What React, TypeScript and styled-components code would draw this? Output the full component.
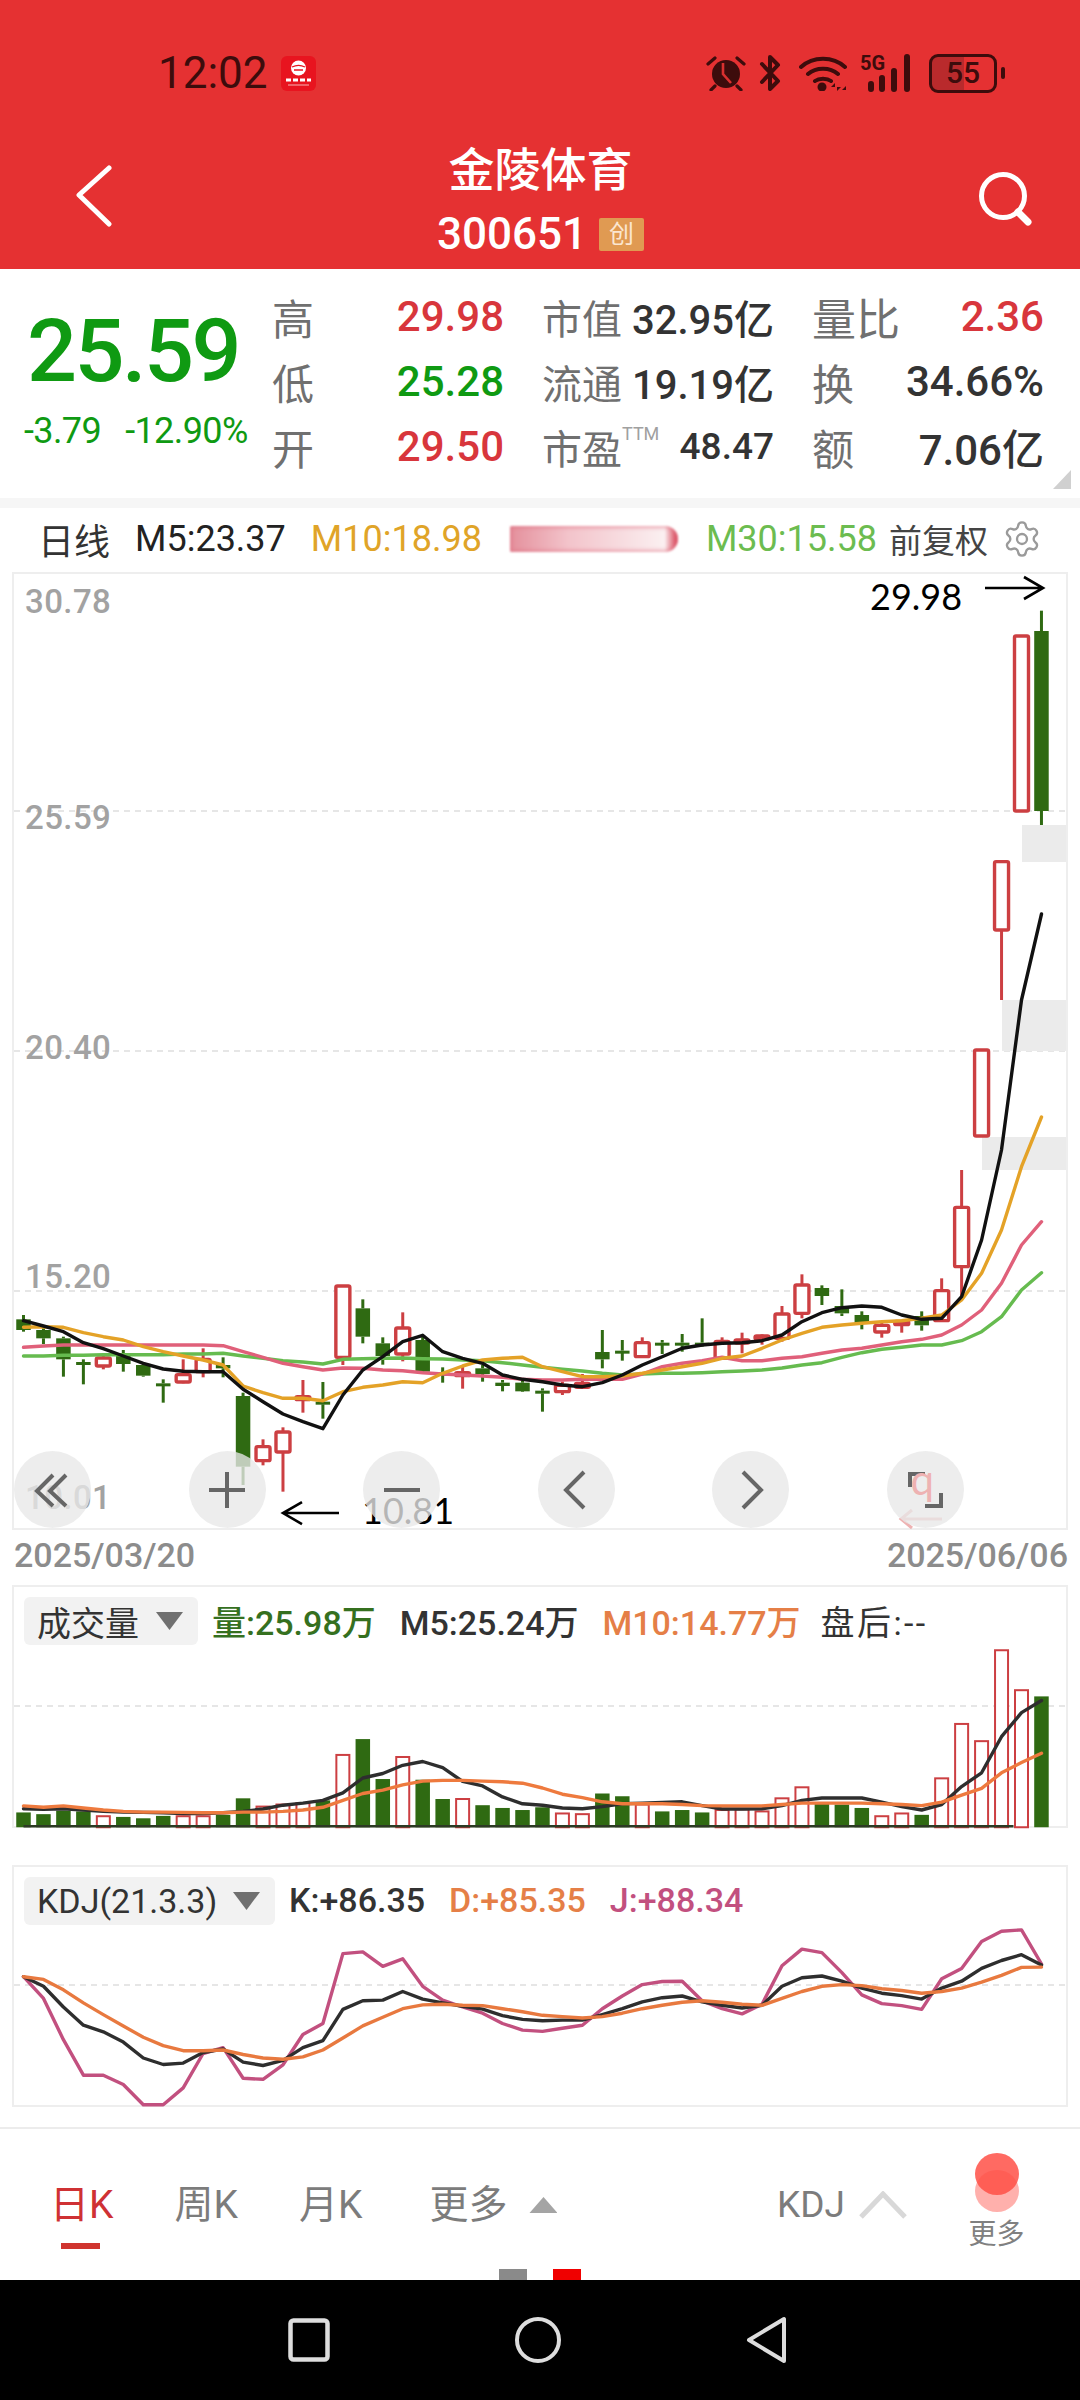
import styled, { createGlobalStyle } from "styled-components";
import { Settings } from "lucide-react";

const RED = "#d8363c";
const GREEN = "#0f9a12";
const CANDLE_RED = "#cc3f42";
const CANDLE_GREEN = "#2f6a12";

const GlobalStyle = createGlobalStyle`
  html, body {
    margin: 0;
    padding: 0;
    background: #fff;
  }
  body {
    width: 1080px;
    height: 2400px;
    overflow: hidden;
    font-family: Roboto, "Noto Sans CJK SC", sans-serif;
  }
  * {
    box-sizing: border-box;
  }
`;

const Page = styled.div`
  width: 1080px;
  height: 2400px;
  display: flex;
  flex-direction: column;
  background: #fff;
`;

/* header */
const Header = styled.header`
  height: 269px;
  background: #e53132;
  padding-top: 53px;
  display: flex;
  flex-direction: column;
`;

const StatusBar = styled.div`
  height: 40px;
  padding: 0 75px 0 158px;
  display: flex;
  align-items: center;
  justify-content: space-between;
  color: #3d0c0c;
`;

const TimeGroup = styled.div`
  display: flex;
  align-items: center;
  gap: 13px;
`;

const Time = styled.span`
  font-size: 44px;
  line-height: 40px;
`;

const StatusIcons = styled.div`
  display: flex;
  align-items: center;
  height: 40px;
`;

const IconSlot = styled.span<{ $gap: number }>`
  display: flex;
  margin-left: ${(p) => p.$gap}px;
`;

const NetworkMark = styled.div`
  position: relative;
  width: 56px;
  height: 38px;
  margin-left: 12px;
  margin-right: 13px;
`;

const FiveG = styled.span`
  position: absolute;
  left: 0;
  top: -1px;
  font-size: 20px;
  line-height: 20px;
  font-weight: 700;
  color: #3d0c0c;
`;

const SignalSvg = styled.svg`
  position: absolute;
  left: 8px;
  top: 0;
`;

const Battery = styled.div`
  width: 68px;
  height: 39px;
  border: 3px solid #3d0c0c;
  border-radius: 9px;
  background: linear-gradient(90deg, #b92a2c 0 52%, transparent 52%);
  display: flex;
  align-items: center;
  justify-content: center;
  font-size: 30px;
  line-height: 30px;
  font-weight: 500;
  color: #3d0c0c;
`;

const BatteryNub = styled.div`
  width: 4px;
  height: 12px;
  margin-left: 4px;
  border-radius: 2px;
  background: #3d0c0c;
`;

const NavBar = styled.div`
  margin-top: 52px;
  padding: 0 48px 0 75px;
  display: flex;
  align-items: flex-start;
  justify-content: space-between;
`;

const NavIcon = styled.span<{ $top: number }>`
  display: flex;
  margin-top: ${(p) => p.$top}px;
`;

const TitleBlock = styled.div`
  display: flex;
  flex-direction: column;
  align-items: center;
  margin-right: 10px;
  color: #fff;
`;

const StockName = styled.div`
  font-size: 46px;
  line-height: 50px;
  font-weight: 500;
`;

const CodeRow = styled.div`
  margin-top: 19px;
  display: flex;
  align-items: center;
  gap: 12px;
`;

const StockCode = styled.span`
  font-size: 44px;
  line-height: 40px;
  font-weight: 500;
`;

const BoardBadge = styled.span`
  width: 45px;
  height: 33px;
  background: #e09a52;
  border-radius: 2px;
  font-size: 25px;
  line-height: 33px;
  text-align: center;
  color: #fbe6d0;
`;

/* quote */
const Quote = styled.section`
  position: relative;
  height: 229px;
  display: flex;
  padding-top: 15px;
`;

const PriceBlock = styled.div`
  width: 272px;
  padding-left: 24px;
  display: flex;
  flex-direction: column;
`;

const Price = styled.div`
  margin-left: 3px;
  margin-top: 23px;
  font-size: 88px;
  line-height: 88px;
  font-weight: 500;
  letter-spacing: -2.5px;
  color: ${GREEN};
`;

const ChangeRow = styled.div`
  margin-top: 16px;
  display: flex;
  gap: 24px;
  font-size: 36px;
  line-height: 40px;
  color: ${GREEN};
  letter-spacing: -0.6px;
  white-space: nowrap;
`;

const StatGrid = styled.div`
  display: grid;
  grid-template-columns: 232px 232px 232px;
  grid-auto-rows: 65px;
  column-gap: 38px;
`;

const Stat = styled.div`
  display: flex;
  align-items: center;
  justify-content: space-between;
`;

const StatLabel = styled.span<{ $size?: number }>`
  font-size: ${(p) => p.$size ?? 42}px;
  color: #707070;
  display: inline-flex;
  align-items: flex-start;
`;

const Sup = styled.span`
  font-size: 18px;
  line-height: 32px;
  color: #a0a0a0;
`;

const StatValue = styled.span<{ $tone?: "up" | "down"; $size?: number }>`
  font-size: ${(p) => p.$size ?? 42}px;
  font-weight: 500;
  color: ${(p) => (p.$tone === "up" ? RED : p.$tone === "down" ? GREEN : "#333")};
  white-space: nowrap;
`;

const CornerMark = styled.div`
  position: absolute;
  left: 1053px;
  top: 201px;
  width: 18px;
  height: 19px;
  background: #d0d0d0;
  clip-path: polygon(100% 0, 100% 100%, 0 100%);
`;

const Strip = styled.div`
  height: 10px;
  background: #f6f6f6;
`;

/* price legend */
const Legend = styled.div`
  height: 64px;
  padding: 0 35px 2px 38px;
  display: flex;
  align-items: center;
  gap: 25px;
  font-size: 36px;
  white-space: nowrap;
`;

const LegendItem = styled.span<{ $color: string; $nudge?: number }>`
  color: ${(p) => p.$color};
  margin-left: ${(p) => p.$nudge ?? 0}px;
`;

const BlurredValue = styled.span`
  width: 168px;
  height: 26px;
  margin-left: 3px;
  border-radius: 2px 14px 14px 2px;
  background: linear-gradient(90deg, #e4909c, #f3c4cb 35%, #fbf0f1 92%, #d94a5c 99%);
  box-shadow: inset 0 0 4px 1px rgba(224, 110, 128, 0.75);
  filter: blur(1.2px);
`;

const LegendRight = styled.div`
  margin-left: -13px;
  display: flex;
  align-items: center;
  gap: 14px;
  font-size: 33px;
  color: #444;
`;

/* chart panels */
const ChartPanel = styled.section<{ $height: number; $offset?: number }>`
  position: relative;
  margin: ${(p) => p.$offset ?? 0}px 12px 0;
  height: ${(p) => p.$height}px;
  border: 2px solid #eeeeee;
  display: flex;
  flex-direction: column;
`;

const ChartSvg = styled.svg`
  display: block;
  overflow: visible;
`;

const AxisLabel = styled.span<{ $top: number }>`
  position: absolute;
  left: 11px;
  top: ${(p) => p.$top}px;
  font-size: 33px;
  line-height: 40px;
  font-weight: 500;
  color: #a2a2a2;
  letter-spacing: 0.4px;
`;

const Annotation = styled.span<{ $left: number; $top: number }>`
  position: absolute;
  left: ${(p) => p.$left}px;
  top: ${(p) => p.$top}px;
  font-family: Lato, sans-serif;
  font-size: 36px;
  line-height: 40px;
  color: #000;
`;

const ToolRow = styled.div`
  position: absolute;
  left: 0;
  bottom: 0;
  display: flex;
  gap: 97.5px;
`;

const ToolButton = styled.div`
  position: relative;
  width: 77px;
  height: 77px;
  border-radius: 50%;
  background: rgba(232, 232, 232, 0.78);
  display: flex;
  align-items: center;
  justify-content: center;
`;

const PinkGlyph = styled.span`
  position: absolute;
  left: 24px;
  top: 3px;
  font-family: Lato, sans-serif;
  font-size: 42px;
  line-height: 50px;
  color: #eeb2b2;
`;

const DateRow = styled.div`
  height: 55px;
  padding: 0 12px 5px 14px;
  display: flex;
  align-items: center;
  justify-content: space-between;
  font-size: 34px;
  font-weight: 500;
  color: #8c8c8c;
`;

const PanelHead = styled.div`
  height: 63px;
  padding: 10px 0 0 10px;
  display: flex;
  align-items: flex-start;
`;

const Selector = styled.div<{ $width: number }>`
  width: ${(p) => p.$width}px;
  height: 48px;
  padding: 0 15px 0 13px;
  background: #f2f2f2;
  border-radius: 6px;
  display: flex;
  align-items: center;
  justify-content: space-between;
  font-size: 34px;
  color: #333;
  white-space: nowrap;
`;

const SelectorCaret = styled.span`
  width: 27px;
  height: 18px;
  background: #707070;
  clip-path: polygon(0 0, 100% 0, 50% 100%);
`;

const ReadoutRow = styled.div`
  height: 46px;
  margin-left: 14px;
  display: flex;
  align-items: center;
  gap: 24px;
  font-size: 34px;
  white-space: nowrap;
`;

const Readout = styled.span<{ $color: string }>`
  color: ${(p) => p.$color};
  font-weight: 500;
`;

const AfterHours = styled(Readout)`
  margin-left: -4px;
  letter-spacing: 2.4px;
  font-weight: 400;
`;

/* bottom tabs */
const TabBar = styled.nav`
  position: relative;
  margin-top: 20px;
  height: 153px;
  border-top: 2px solid #ececec;
  padding: 0 55px 0 50px;
  display: flex;
  align-items: flex-start;
`;

const Tabs = styled.div`
  padding-top: 53px;
  display: flex;
  gap: 61px;
  align-items: center;
`;

const Tab = styled.span<{ $active?: boolean }>`
  position: relative;
  font-size: 39px;
  line-height: 46px;
  color: ${(p) => (p.$active ? "#cf3134" : "#7c7c7c")};

  ${(p) =>
    p.$active &&
    `&::after {
      content: "";
      position: absolute;
      left: 11px;
      top: 61px;
      width: 39px;
      height: 6px;
      background: #d0342f;
    }`}
`;

const MoreTab = styled(Tab)`
  display: flex;
  align-items: center;
  gap: 22px;
  margin-left: 6px;
`;

const UpCaret = styled.span`
  width: 28px;
  height: 16px;
  background: #a4a4a4;
  clip-path: polygon(50% 0, 100% 100%, 0 100%);
`;

const IndicatorToggle = styled.div`
  margin-left: auto;
  padding-top: 53px;
  display: flex;
  align-items: center;
  gap: 13px;
  font-size: 37px;
  line-height: 46px;
  color: #7c7c7c;
`;

const MoreButton = styled.div`
  margin-left: 60px;
  width: 57px;
  padding-top: 24px;
  display: flex;
  flex-direction: column;
  align-items: center;
`;

const MoreDots = styled.div`
  position: relative;
  width: 44px;
  height: 59px;
`;

const MoreDot = styled.span<{ $top: number; $opacity: number }>`
  position: absolute;
  left: 0;
  top: ${(p) => p.$top}px;
  width: 44px;
  height: 42px;
  border-radius: 50%;
  background: rgba(255, 80, 70, ${(p) => p.$opacity});
`;

const MoreLabel = styled.span`
  margin-top: 5px;
  font-size: 28px;
  line-height: 36px;
  color: #808080;
  white-space: nowrap;
`;

const PageDot = styled.span<{ $left: number; $color: string }>`
  position: absolute;
  left: ${(p) => p.$left}px;
  bottom: 0;
  width: 28px;
  height: 11px;
  background: ${(p) => p.$color};
`;

const SystemNav = styled.div`
  height: 120px;
  background: #000;
  padding: 0 292px 0 288px;
  display: flex;
  align-items: center;
  justify-content: space-between;
`;

/* chart data, sampled from the picture */
const candles: [number, number, number, number, number][] = [
  [495, 508, 540, 545, 0], [535, 540, 565, 582, 0], [560, 565, 628, 680, 0], [628, 636, 642, 703, 0],
  [610, 624, 648, 658, 1], [600, 612, 642, 665, 0], [640, 645, 677, 680, 0], [688, 700, 706, 758, 0],
  [628, 674, 696, 700, 1], [595, 628, 665, 682, 1], [622, 645, 655, 682, 0], [728, 738, 950, 1005, 0],
  [868, 890, 932, 946, 1], [832, 846, 906, 1025, 1], [690, 740, 748, 788, 1], [696, 755, 763, 806, 0],
  [408, 408, 622, 645, 1], [448, 475, 560, 580, 0], [562, 580, 618, 644, 0], [487, 534, 612, 634, 1],
  [555, 570, 665, 668, 0], [652, 668, 672, 698, 0], [650, 668, 675, 716, 1], [645, 655, 672, 695, 0],
  [690, 698, 708, 724, 0], [690, 698, 724, 726, 0], [715, 722, 730, 785, 0], [695, 706, 725, 735, 1],
  [672, 700, 712, 714, 1], [540, 606, 628, 655, 0], [570, 602, 608, 632, 0], [562, 578, 620, 622, 1],
  [570, 578, 584, 612, 0], [552, 578, 586, 605, 0], [505, 578, 585, 590, 0], [562, 574, 625, 628, 1],
  [548, 570, 578, 610, 1], [553, 558, 566, 584, 1], [468, 492, 565, 575, 1], [373, 405, 490, 505, 1],
  [406, 414, 438, 465, 0], [418, 468, 490, 498, 0], [484, 495, 518, 538, 0], [515, 526, 546, 563, 1],
  [510, 514, 524, 548, 1], [484, 498, 526, 542, 0], [385, 422, 512, 514, 1], [60, 172, 350, 450, 1],
  [-300, -300, -42, -42, 1], [-865, -865, -660, -450, 1], [-1542, -1542, -1017, -1017, 1], [-1618, -1557, -1017, -975, 0],
];

const ma5 = [512, 528, 545, 578, 596, 618, 640, 657, 664, 665, 665, 718, 755, 792, 815, 836, 735, 660, 620, 575, 556, 605, 625, 640, 675, 688, 695, 705, 710, 698, 675, 645, 620, 595, 585, 580, 578, 572, 555, 515, 488, 473, 468, 472, 495, 508, 505, 440, 270, 0, -450, -708];
const ma10 = [532, 530, 532, 548, 560, 570, 590, 605, 618, 630, 645, 708, 728, 745, 745, 752, 725, 712, 705, 695, 698, 670, 648, 630, 625, 622, 650, 665, 680, 680, 678, 670, 660, 650, 640, 625, 618, 595, 570, 550, 532, 525, 520, 515, 512, 505, 495, 450, 370, 240, 50, -99];
const ma20 = [592, 588, 585, 585, 585, 585, 585, 585, 585, 585, 587, 605, 622, 640, 650, 660, 654, 655, 660, 662, 668, 672, 675, 678, 682, 688, 690, 690, 688, 688, 688, 672, 650, 640, 632, 622, 632, 632, 625, 620, 610, 600, 595, 585, 575, 568, 555, 525, 480, 400, 285, 215];
const ma30 = [618, 618, 616, 616, 614, 614, 614, 614, 612, 612, 610, 618, 625, 632, 636, 642, 628, 626, 625, 624, 626, 627, 630, 632, 638, 645, 652, 658, 663, 670, 675, 672, 670, 670, 668, 665, 663, 660, 654, 645, 638, 622, 608, 598, 592, 585, 585, 572, 545, 500, 420, 368];

const volumes = [675, 680, 670, 672, 686, 688, 692, 685, 686, 686, 682, 634, 658, 652, 648, 640, 508, 462, 578, 514, 580, 636, 636, 654, 662, 668, 660, 678, 680, 620, 628, 652, 672, 668, 675, 668, 666, 672, 634, 602, 650, 652, 662, 686, 678, 682, 576, 418, 468, 204, 320, 338];
const volM5 = [664, 666, 664, 668, 672, 674, 675, 676, 678, 678, 676, 672, 665, 654, 648, 640, 618, 575, 562, 538, 527, 545, 585, 598, 630, 650, 654, 662, 664, 658, 650, 648, 646, 644, 655, 665, 665, 664, 655, 640, 633, 633, 633, 645, 658, 668, 652, 600, 560, 455, 385, 350];
const volM10 = [656, 660, 656, 662, 668, 672, 674, 674, 675, 676, 676, 674, 674, 672, 668, 660, 640, 620, 610, 595, 584, 582, 582, 584, 586, 590, 604, 622, 632, 644, 650, 650, 650, 652, 655, 656, 656, 656, 652, 648, 648, 648, 648, 650, 652, 655, 645, 625, 605, 560, 530, 503];

const kdjK = [1152, 1180, 1240, 1293, 1312, 1342, 1388, 1407, 1403, 1372, 1362, 1400, 1410, 1395, 1358, 1338, 1247, 1222, 1220, 1195, 1217, 1228, 1238, 1246, 1265, 1276, 1280, 1278, 1278, 1262, 1245, 1225, 1213, 1208, 1225, 1235, 1243, 1235, 1180, 1155, 1150, 1165, 1185, 1200, 1207, 1217, 1185, 1165, 1128, 1105, 1088, 1118];
const kdjD = [1152, 1160, 1190, 1228, 1262, 1295, 1328, 1352, 1367, 1367, 1365, 1378, 1388, 1392, 1385, 1365, 1330, 1295, 1270, 1245, 1234, 1232, 1235, 1236, 1245, 1254, 1264, 1268, 1272, 1268, 1258, 1245, 1235, 1226, 1222, 1226, 1232, 1235, 1215, 1195, 1180, 1175, 1178, 1187, 1192, 1200, 1195, 1185, 1168, 1148, 1125, 1124];
const kdjJ = [1152, 1215, 1335, 1438, 1438, 1465, 1524, 1524, 1475, 1375, 1358, 1447, 1450, 1408, 1320, 1288, 1085, 1080, 1122, 1100, 1180, 1220, 1240, 1258, 1288, 1307, 1311, 1302, 1293, 1245, 1208, 1175, 1166, 1165, 1222, 1245, 1260, 1232, 1120, 1072, 1082, 1140, 1205, 1230, 1236, 1247, 1158, 1128, 1050, 1020, 1016, 1115];

const xAt = (i: number) => 23.5 + 19.96 * i;
const mainY = (z: number) => 1150 + z / 3;
const lowerY = (z: number) => 1580 + z / 2.904;

const toPoints = (values: number[], toY: (z: number) => number) =>
  values.map((v, i) => `${xAt(i).toFixed(1)},${toY(v).toFixed(1)}`).join(" ");

const Line = ({ values, toY, color, width = 3.4 }: { values: number[]; toY: (z: number) => number; color: string; width?: number }) => (
  <polyline points={toPoints(values, toY)} fill="none" stroke={color} strokeWidth={width} strokeLinejoin="round" strokeLinecap="round" />
);

const GridLine = ({ y }: { y: number }) => (
  <line x1="14" x2="1066" y1={y} y2={y} stroke="#dedede" strokeWidth="1.5" strokeDasharray="6 5" />
);

const PriceChart = () => (
  <ChartSvg width="1052" height="954" viewBox="14 574 1052 954">
    <GridLine y={811} />
    <GridLine y={1051} />
    <GridLine y={1291} />
    <rect x="1022" y="825" width="44" height="37" fill="#ebebeb" />
    <rect x="1002" y="1000" width="64" height="51" fill="#ebebeb" />
    <rect x="982" y="1137" width="84" height="33" fill="#ebebeb" />
    {candles.map(([hi, top, bot, lo, up], i) => {
      const x = xAt(i);
      const color = up ? CANDLE_RED : CANDLE_GREEN;
      return (
        <g key={i}>
          <line x1={x} x2={x} y1={mainY(hi)} y2={mainY(top)} stroke={color} strokeWidth="3" />
          <line x1={x} x2={x} y1={mainY(bot)} y2={mainY(lo)} stroke={color} strokeWidth="3" />
          {up ? (
            <rect x={x - 7} y={mainY(top)} width="14" height={Math.max(mainY(bot) - mainY(top), 3)} rx="1.5" fill="#fff" stroke={color} strokeWidth="3.4" />
          ) : (
            <rect x={x - 7.25} y={mainY(top)} width="14.5" height={Math.max(mainY(bot) - mainY(top), 3)} fill={color} />
          )}
        </g>
      );
    })}
    <Line values={ma30} toY={mainY} color="#66bb4f" />
    <Line values={ma20} toY={mainY} color="#e0607a" />
    <Line values={ma10} toY={mainY} color="#e4a227" />
    <Line values={ma5} toY={mainY} color="#111" />
    <path d="M985 588H1042M1024 577L1043 588L1024 599" fill="none" stroke="#000" strokeWidth="2.6" />
    <path d="M339 1513H283M302 1502L283 1513L302 1524" fill="none" stroke="#000" strokeWidth="2.6" />
    <path d="M942 1519H902M912 1510L901 1519L912 1528" fill="none" stroke="#eeb2b2" strokeWidth="3" />
  </ChartSvg>
);

const VolumeChart = () => (
  <ChartSvg width="1052" height="176" viewBox="14 1650 1052 176">
    <GridLine y={1706} />
    {volumes.map((top, i) => {
      const x = xAt(i);
      const y = lowerY(top);
      const bottom = lowerY(718);
      return candles[i][4] ? (
        <rect key={i} x={x - 6.5} y={y} width="13" height={bottom - y} fill="#fff" stroke={CANDLE_RED} strokeWidth="2" />
      ) : (
        <rect key={i} x={x - 7.25} y={y} width="14.5" height={bottom - y} fill={CANDLE_GREEN} />
      );
    })}
    <line x1={xAt(0)} x2={xAt(50) - 8} y1={lowerY(715)} y2={lowerY(715)} stroke="#2c3a24" strokeWidth="2.5" />
    <Line values={volM5} toY={lowerY} color="#2e2e2e" />
    <Line values={volM10} toY={lowerY} color="#ee7a3e" />
  </ChartSvg>
);

const KdjChart = () => (
  <ChartSvg width="1052" height="175" viewBox="14 1930 1052 175">
    <GridLine y={1985} />
    <Line values={kdjJ} toY={lowerY} color="#c2507f" />
    <Line values={kdjK} toY={lowerY} color="#2e2e2e" />
    <Line values={kdjD} toY={lowerY} color="#e8793f" />
  </ChartSvg>
);

/* icons */
const ToolIcon = ({ d }: { d: string }) => (
  <svg width="44" height="44" viewBox="0 0 44 44" fill="none" stroke="#666" strokeWidth="4">
    <path d={d} />
  </svg>
);

const AppIcon = () => (
  <svg width="35" height="35" viewBox="0 0 35 35">
    <rect width="35" height="35" rx="6" fill="#e8141f" />
    <circle cx="17.5" cy="12" r="7.5" fill="#fff" />
    <path d="M11 11c4-2 9-2 13 0M13 14h9" stroke="#e8141f" strokeWidth="1.3" fill="none" />
    <path d="M5 24h5M12 24h5M19 24h5M26 24h4" stroke="#fff" strokeWidth="3" />
    <path d="M7 29h21" stroke="#f7b5b5" strokeWidth="1" />
  </svg>
);

const AlarmIcon = () => (
  <svg width="40" height="36" viewBox="0 0 40 36">
    <circle cx="20" cy="19" r="14" fill="#3d0c0c" />
    <path d="M2 9l7-6M38 9l-7-6M9 31l-4 4M31 31l4 4" stroke="#3d0c0c" strokeWidth="3.2" strokeLinecap="round" />
    <path d="M17 8v11l8 9" stroke="#d9302f" strokeWidth="2.6" fill="none" />
  </svg>
);

const BluetoothIcon = () => (
  <svg width="24" height="36" viewBox="0 0 24 36">
    <path d="M3 9l16 17-8 8V2l8 8L3 27" fill="none" stroke="#3d0c0c" strokeWidth="4" strokeLinejoin="round" strokeLinecap="round" />
  </svg>
);

const WifiIcon = () => (
  <svg width="49" height="36" viewBox="0 0 49 36">
    <path d="M2 12c12-11 32-11 44 0M9 19c8-7 22-7 30 0M16 26c4-3 12-3 16 0" fill="none" stroke="#3d0c0c" strokeWidth="4" strokeLinecap="round" />
    <circle cx="23" cy="32" r="4.5" fill="#3d0c0c" />
    <path d="M36 28l-4 4h4zM38 36l4-4h-4zM47 31l-4 4h4z" fill="#3d0c0c" />
  </svg>
);

const SignalBars = () => (
  <SignalSvg width="47" height="38" viewBox="0 0 47 38">
    <path d="M3 30v5M14 24v11M26 17v18M39 3v32" stroke="#3d0c0c" strokeWidth="6" strokeLinecap="round" />
  </SignalSvg>
);

const App = () => (
  <Page>
    <GlobalStyle />
    <Header>
      <StatusBar>
        <TimeGroup>
          <Time>12:02</Time>
          <AppIcon />
        </TimeGroup>
        <StatusIcons>
          <AlarmIcon />
          <IconSlot $gap={13}>
            <BluetoothIcon />
          </IconSlot>
          <IconSlot $gap={16}>
            <WifiIcon />
          </IconSlot>
          <NetworkMark>
            <SignalBars />
            <FiveG>5G</FiveG>
          </NetworkMark>
          <Battery>55</Battery>
          <BatteryNub />
        </StatusIcons>
      </StatusBar>
      <NavBar>
        <NavIcon $top={20}>
          <svg width="38" height="62" viewBox="0 0 38 62" fill="none" stroke="#fff" strokeWidth="5" strokeLinecap="round" strokeLinejoin="round">
            <path d="M34 3L4 30L34 59" />
          </svg>
        </NavIcon>
        <TitleBlock>
          <StockName>金陵体育</StockName>
          <CodeRow>
            <StockCode>300651</StockCode>
            <BoardBadge>创</BoardBadge>
          </CodeRow>
        </TitleBlock>
        <NavIcon $top={26}>
          <svg width="54" height="56" viewBox="0 0 54 56" fill="none" stroke="#fff" strokeLinecap="round">
            <circle cx="25" cy="25" r="21.5" strokeWidth="5" />
            <path d="M40 41L50 51" strokeWidth="7" />
          </svg>
        </NavIcon>
      </NavBar>
    </Header>

    <Quote>
      <PriceBlock>
        <Price>25.59</Price>
        <ChangeRow>
          <span>-3.79</span>
          <span>-12.90%</span>
        </ChangeRow>
      </PriceBlock>
      <StatGrid>
        <Stat>
          <StatLabel>高</StatLabel>
          <StatValue $tone="up">29.98</StatValue>
        </Stat>
        <Stat>
          <StatLabel $size={40}>市值</StatLabel>
          <StatValue $size={40}>32.95亿</StatValue>
        </Stat>
        <Stat>
          <StatLabel $size={44}>量比</StatLabel>
          <StatValue $tone="up">2.36</StatValue>
        </Stat>
        <Stat>
          <StatLabel>低</StatLabel>
          <StatValue $tone="down">25.28</StatValue>
        </Stat>
        <Stat>
          <StatLabel $size={40}>流通</StatLabel>
          <StatValue $size={40}>19.19亿</StatValue>
        </Stat>
        <Stat>
          <StatLabel>换</StatLabel>
          <StatValue>34.66%</StatValue>
        </Stat>
        <Stat>
          <StatLabel>开</StatLabel>
          <StatValue $tone="up">29.50</StatValue>
        </Stat>
        <Stat>
          <StatLabel $size={40}>
            市盈<Sup>TTM</Sup>
          </StatLabel>
          <StatValue $size={37}>48.47</StatValue>
        </Stat>
        <Stat>
          <StatLabel>额</StatLabel>
          <StatValue>7.06亿</StatValue>
        </Stat>
      </StatGrid>
      <CornerMark />
    </Quote>
    <Strip />

    <Legend>
      <LegendItem $color="#333">日线</LegendItem>
      <LegendItem $color="#222">M5:23.37</LegendItem>
      <LegendItem $color="#e0a428">M10:18.98</LegendItem>
      <BlurredValue />
      <LegendItem $color="#6cbc50" $nudge={3}>M30:15.58</LegendItem>
      <LegendRight>
        <span>前复权</span>
        <Settings size={40} strokeWidth={1.4} color="#9a9a9a" />
      </LegendRight>
    </Legend>

    <ChartPanel $height={958}>
      <PriceChart />
      <AxisLabel $top={8}>30.78</AxisLabel>
      <AxisLabel $top={224}>25.59</AxisLabel>
      <AxisLabel $top={454}>20.40</AxisLabel>
      <AxisLabel $top={683}>15.20</AxisLabel>
      <AxisLabel $top={904}>10.01</AxisLabel>
      <Annotation $left={856} $top={2}>29.98</Annotation>
      <Annotation $left={348} $top={916}>10.81</Annotation>
      <ToolRow>
        <ToolButton>
          <ToolIcon d="M22 7L6 23L22 38M35 7L19 23L35 38" />
        </ToolButton>
        <ToolButton>
          <ToolIcon d="M4 22H40M22 4V40" />
        </ToolButton>
        <ToolButton>
          <ToolIcon d="M4 22H40" />
        </ToolButton>
        <ToolButton>
          <ToolIcon d="M30 4L12 22L30 40" />
        </ToolButton>
        <ToolButton>
          <ToolIcon d="M14 4L32 22L14 40" />
        </ToolButton>
        <ToolButton>
          <PinkGlyph>q</PinkGlyph>
          <ToolIcon d="M22 6H7V19M22 38H38V25" />
        </ToolButton>
      </ToolRow>
    </ChartPanel>

    <DateRow>
      <span>2025/03/20</span>
      <span>2025/06/06</span>
    </DateRow>

    <ChartPanel $height={243}>
      <PanelHead>
        <Selector $width={174}>
          成交量
          <SelectorCaret />
        </Selector>
        <ReadoutRow>
          <Readout $color="#35701f">量:25.98万</Readout>
          <Readout $color="#333">M5:25.24万</Readout>
          <Readout $color="#e57f47">M10:14.77万</Readout>
          <AfterHours $color="#333">盘后:--</AfterHours>
        </ReadoutRow>
      </PanelHead>
      <VolumeChart />
    </ChartPanel>

    <ChartPanel $height={242} $offset={37}>
      <PanelHead>
        <Selector $width={251}>
          KDJ(21.3.3)
          <SelectorCaret />
        </Selector>
        <ReadoutRow>
          <Readout $color="#333">K:+86.35</Readout>
          <Readout $color="#e57f47">D:+85.35</Readout>
          <Readout $color="#c2507f">J:+88.34</Readout>
        </ReadoutRow>
      </PanelHead>
      <KdjChart />
    </ChartPanel>

    <TabBar>
      <Tabs>
        <Tab $active>日K</Tab>
        <Tab>周K</Tab>
        <Tab>月K</Tab>
        <MoreTab>
          更多
          <UpCaret />
        </MoreTab>
      </Tabs>
      <IndicatorToggle>
        KDJ
        <svg width="50" height="28" viewBox="0 0 50 28" fill="none" stroke="#d8d8d8" strokeWidth="5">
          <path d="M3 26L25 3L47 26" />
        </svg>
      </IndicatorToggle>
      <MoreButton>
        <MoreDots>
          <MoreDot $top={0} $opacity={0.85} />
          <MoreDot $top={17} $opacity={0.45} />
        </MoreDots>
        <MoreLabel>更多</MoreLabel>
      </MoreButton>
      <PageDot $left={499} $color="#8a8a8a" />
      <PageDot $left={553} $color="#f00000" />
    </TabBar>

    <SystemNav>
      <svg width="42" height="44" viewBox="0 0 42 44" fill="none" stroke="#ddd" strokeWidth="4.5">
        <rect x="2.5" y="2.5" width="37" height="39" rx="3" />
      </svg>
      <svg width="46" height="46" viewBox="0 0 46 46" fill="none" stroke="#ddd" strokeWidth="4">
        <circle cx="23" cy="23" r="21" />
      </svg>
      <svg width="42" height="48" viewBox="0 0 42 48" fill="none" stroke="#ddd" strokeWidth="4" strokeLinejoin="round">
        <path d="M38 3V45L3 24Z" />
      </svg>
    </SystemNav>
  </Page>
);

export default App;
